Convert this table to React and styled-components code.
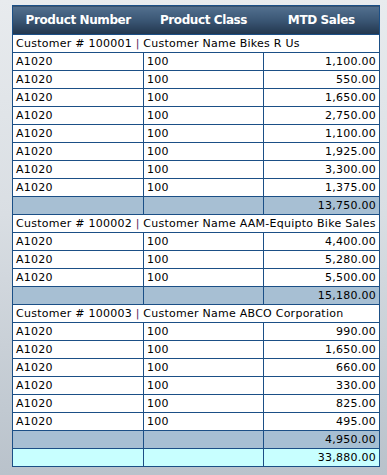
import styled, { createGlobalStyle } from "styled-components";

const GlobalStyle = createGlobalStyle`
  html, body {
    margin: 0;
    padding: 0;
  }
  body {
    width: 387px;
    height: 475px;
    background: linear-gradient(180deg, #e8ebee 0%, #d9dee3 45%, #b9c2cb 100%);
    font-family: "DejaVu Sans", Verdana, sans-serif;
  }
`;

const Page = styled.div`
  padding: 5px 0 0 12px;
`;

const Table = styled.table`
  width: 368px;
  border-collapse: collapse;
  table-layout: fixed;
  border: 1px solid #1b4f86;
  font-size: 11px;
  letter-spacing: 0.25px;
  color: #000;
`;

const HeadCell = styled.th`
  height: 28px;
  padding: 0;
  background: linear-gradient(180deg, #53708f 0%, #3a5674 50%, #22364d 100%);
  color: #fff;
  font-size: 12px;
  letter-spacing: -0.4px;
  font-weight: bold;
  text-align: center;
  border: none;
`;

const Row = styled.tr`
  background: ${(p) =>
    p.$kind === "sub" ? "#a7bfd3" : p.$kind === "grand" ? "#c8ffff" : "#fff"};
`;

const Cell = styled.td`
  height: 17px;
  padding: 0 3px;
  border: 1px solid #1b4f86;
  white-space: nowrap;
  overflow: hidden;
  text-align: ${(p) => (p.$num ? "right" : "left")};
  line-height: 17px;
`;

const Pipe = styled.span`
  color: #5a1f5f;
`;

const customers = [
  {
    id: "100001",
    name: "Bikes R Us",
    sales: ["1,100.00", "550.00", "1,650.00", "2,750.00", "1,100.00", "1,925.00", "3,300.00", "1,375.00"],
    total: "13,750.00",
  },
  {
    id: "100002",
    name: "AAM-Equipto Bike Sales",
    sales: ["4,400.00", "5,280.00", "5,500.00"],
    total: "15,180.00",
  },
  {
    id: "100003",
    name: "ABCO Corporation",
    sales: ["990.00", "1,650.00", "660.00", "330.00", "825.00", "495.00"],
    total: "4,950.00",
  },
];

export default function App() {
  return (
    <>
      <GlobalStyle />
      <Page>
        <Table>
          <colgroup>
            <col style={{ width: 131 }} />
            <col style={{ width: 120 }} />
            <col />
          </colgroup>
          <thead>
            <tr>
              <HeadCell>Product Number</HeadCell>
              <HeadCell>Product Class</HeadCell>
              <HeadCell>MTD Sales</HeadCell>
            </tr>
          </thead>
          <tbody>
            {customers.map((c) => (
              <CustomerGroup key={c.id} customer={c} />
            ))}
            <Row $kind="grand">
              <Cell />
              <Cell />
              <Cell $num>33,880.00</Cell>
            </Row>
          </tbody>
        </Table>
      </Page>
    </>
  );
}

function CustomerGroup({ customer }) {
  return (
    <>
      <Row>
        <Cell colSpan={3}>
          Customer # {customer.id} <Pipe>|</Pipe> Customer Name {customer.name}
        </Cell>
      </Row>
      {customer.sales.map((s, i) => (
        <Row key={i}>
          <Cell>A1020</Cell>
          <Cell>100</Cell>
          <Cell $num>{s}</Cell>
        </Row>
      ))}
      <Row $kind="sub">
        <Cell />
        <Cell />
        <Cell $num>{customer.total}</Cell>
      </Row>
    </>
  );
}
